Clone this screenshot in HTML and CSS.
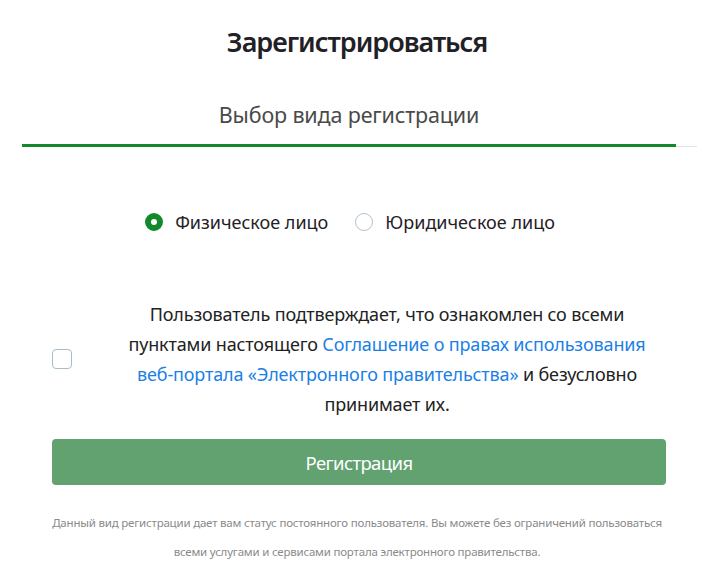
FILE: index.html
```html
<!DOCTYPE html>
<html lang="ru">
<head>
  <meta charset="UTF-8">
  <meta name="viewport" content="width=device-width, initial-scale=1.0">
  <title>Регистрация</title>
  <link rel="stylesheet" href="styles.css">
</head>
<body>

<div class="register">
  <h1 class="register-title">Зарегистрироваться</h1>

  <!-- вкладки -->
  <div class="tabs">
    <div class="tab active">Выбор вида регистрации</div>
  </div>

  <!-- тип пользователя -->
  <div class="types">
    <label class="radio"><input type="radio" name="type" value="person" checked><span class="mark"></span>Физическое лицо</label>
    <label class="radio"><input type="radio" name="type" value="company"><span class="mark"></span>Юридическое лицо</label>
  </div>

  <!-- соглашение -->
  <div class="agree">
    <label class="check"><input type="checkbox"><span class="box"></span></label>
    <p class="agree-text">Пользователь подтверждает, что ознакомлен со всеми пунктами настоящего <a href="#">Соглашение о правах использования веб-портала «Электронного правительства»</a> и безусловно принимает их.</p>
  </div>

  <button type="button" class="btn">Регистрация</button>

  <p class="note">Данный вид регистрации дает вам статус постоянного пользователя. Вы можете без ограничений пользоваться всеми услугами и сервисами портала электронного правительства.</p>
</div>

</body>
</html>
```

FILE: styles.css
```css
/* общие */
body {
  margin: 0;
  font-family: "Noto Sans", "Open Sans", sans-serif;
  color: #222;
  background: #fff;
}

.register {
  width: 714px;
}

.register-title {
  margin: 0;
  padding-top: 23px;
  text-align: center;
  font-size: 27px;
  font-weight: 600;
  line-height: 38px;
  color: #1f2126;
  letter-spacing: -1px;
}

/* вкладки */
.tabs {
  margin: 39px 17px 0 22px;
  border-bottom: 1px solid #dfe6ea;
}

.tab {
  width: 654px;
  text-align: center;
  font-size: 21.5px;
  color: #4a4a4a;
  padding-bottom: 14px;
  line-height: 30px;
  letter-spacing: -0.15px;
}

.tab.active {
  border-bottom: 3px solid #128a2a;
  margin-bottom: -1px;
}

/* радио */
.types {
  display: flex;
  justify-content: center;
  gap: 27px;
  margin-top: 63px;
  padding-right: 14px;
}

.radio {
  display: flex;
  align-items: center;
  font-size: 18px;
  color: #1f2126;
  cursor: pointer;
}

.radio input,
.check input {
  display: none;
}

.radio .mark {
  width: 18px;
  height: 18px;
  box-sizing: border-box;
  border: 1px solid #b3c4cc;
  border-radius: 50%;
  margin-right: 12px;
}

.radio input:checked + .mark {
  border: 6px solid #128a2a;
}

/* соглашение */
.agree {
  display: flex;
  align-items: center;
  margin-top: 65px;
  padding-left: 52px;
}

.check .box {
  display: block;
  width: 20px;
  height: 20px;
  box-sizing: border-box;
  border: 1px solid #a9bdc8;
  border-radius: 4px;
  cursor: pointer;
}

.agree-text {
  margin: 0 0 0 48px;
  width: 534px;
  text-align: center;
  font-size: 18px;
  line-height: 30px;
  color: #222;
  letter-spacing: -0.15px;
}

.agree-text a {
  color: #1a7fe6;
  text-decoration: none;
}

/* кнопка */
.btn {
  display: block;
  width: 614px;
  height: 46px;
  margin: 20px 0 0 52px;
  border: none;
  border-radius: 4px;
  background: #62a170;
  color: #fff;
  font-family: "Noto Sans", sans-serif;
  font-size: 18.5px;
  letter-spacing: -0.6px;
  cursor: pointer;
}

.note {
  margin: 23px 40px 0;
  text-align: center;
  font-size: 11.5px;
  line-height: 29px;
  color: #8a8a8a;
  letter-spacing: -0.2px;
}
```
